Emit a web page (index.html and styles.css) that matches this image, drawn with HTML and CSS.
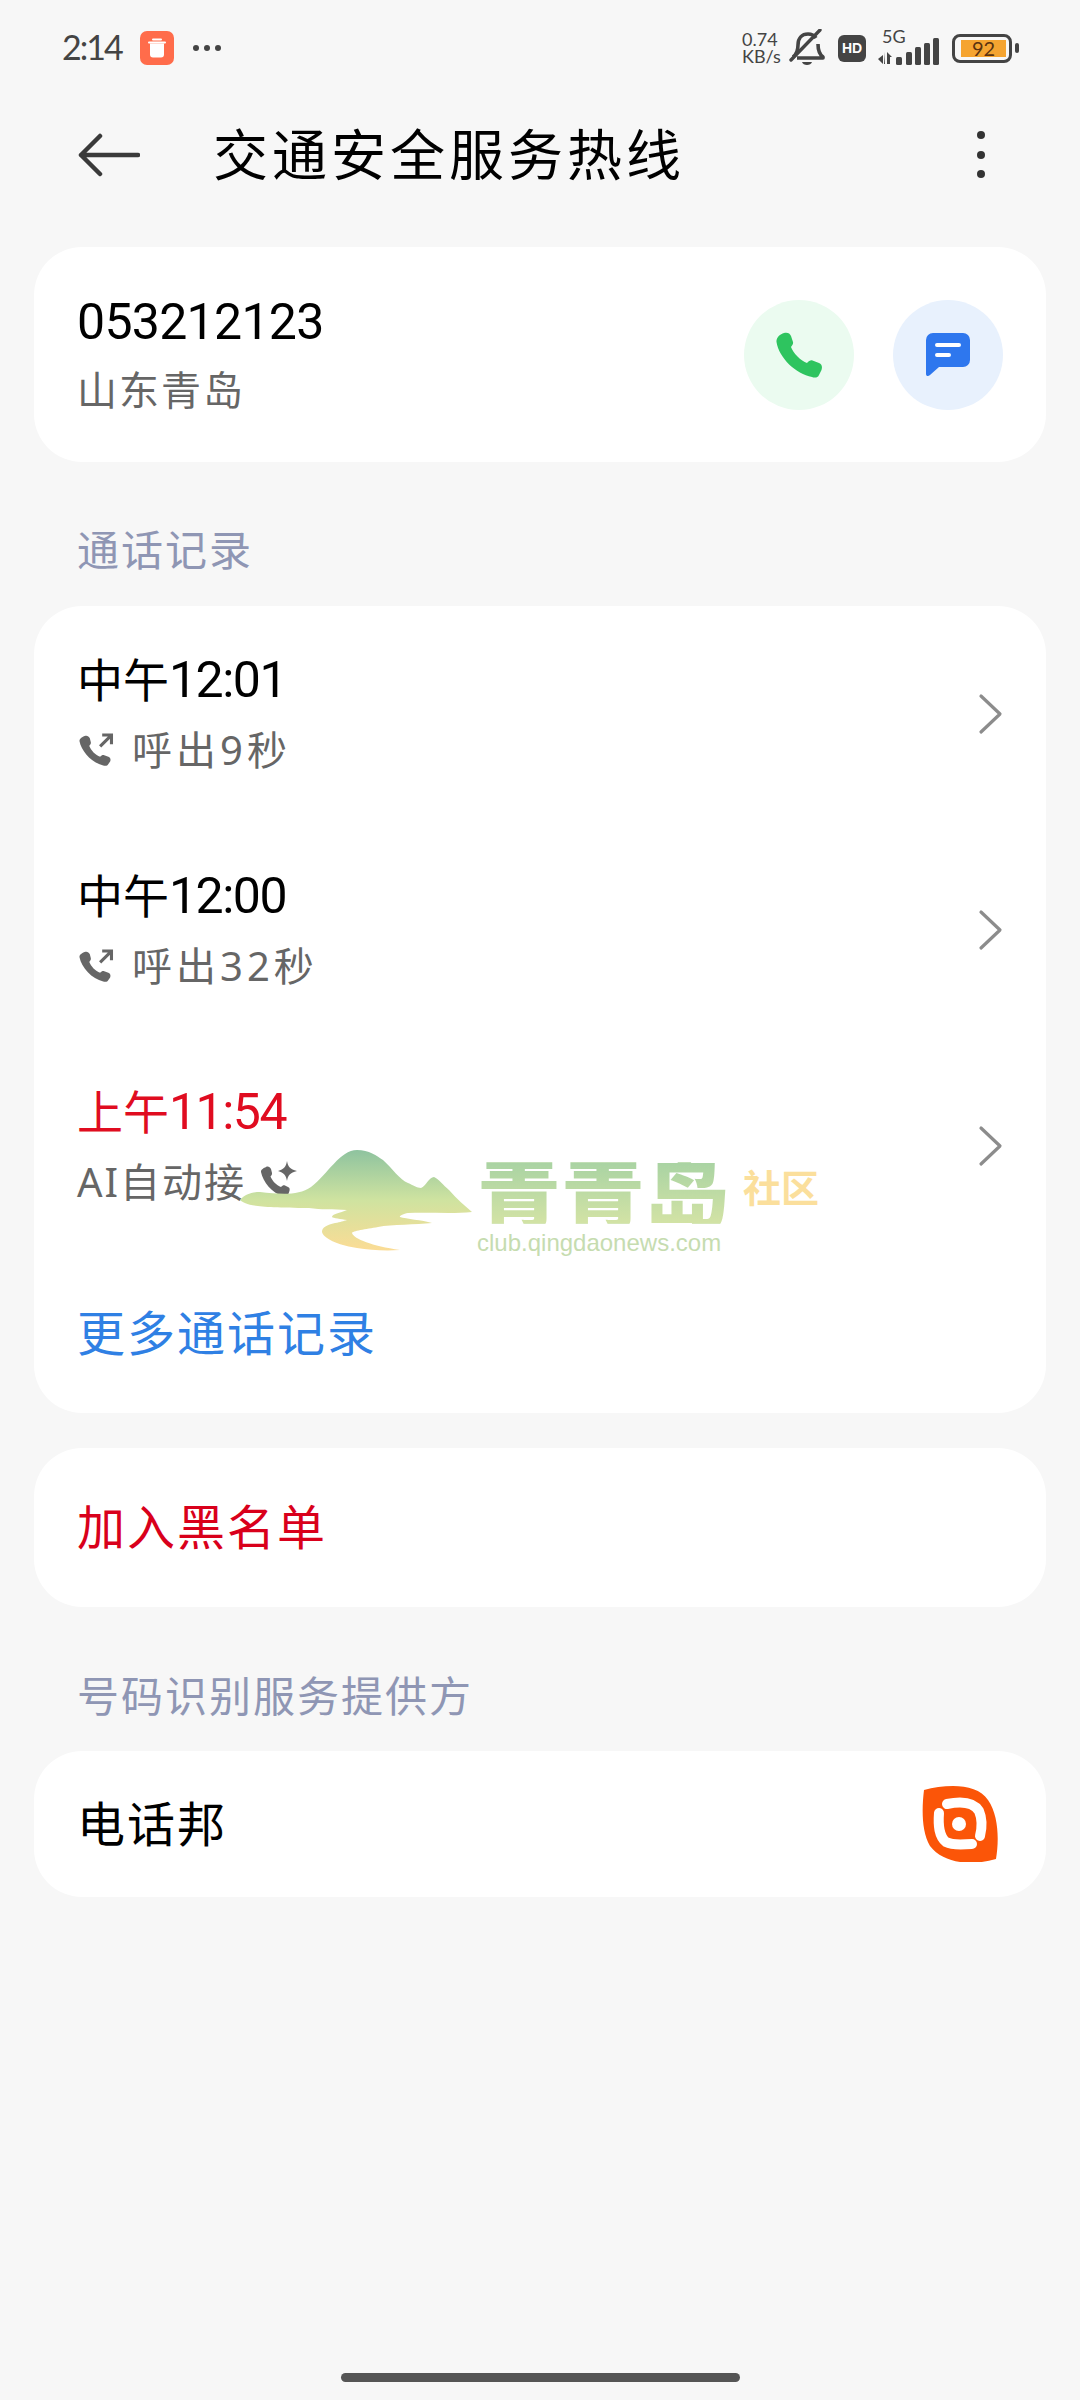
FILE: index.html
```html
<!DOCTYPE html>
<html lang="zh-CN">
<head>
  <meta charset="UTF-8" />
  <meta name="viewport" content="width=device-width, initial-scale=1.0" />
  <title>交通安全服务热线</title>
  <link rel="stylesheet" href="styles.css">
</head>
<body>
  <div class="page">
    <div class="status">
      <div class="status-left">
        <span class="clock">2:14</span>
        <svg class="app-icon" width="34" height="34" viewBox="0 0 34 34">
          <rect width="34" height="34" rx="7" fill="#ff6c4b"/>
          <path d="M13 8.500h8M9 11.500h16" stroke="#fff" stroke-width="2" stroke-linecap="round"/>
          <path d="M10 12.500h14v11a3 3 0 0 1-3 3h-8a3 3 0 0 1-3-3z" fill="#fff"/>
        </svg>
        <svg class="more-dots" width="30" height="8" viewBox="0 0 30 8">
          <circle cx="4" cy="4" r="3" fill="#444"/><circle cx="15" cy="4" r="3" fill="#444"/><circle cx="26" cy="4" r="3" fill="#444"/>
        </svg>
      </div>
      <div class="status-right">
        <div class="speed"><span>0.74</span><span>KB/s</span></div>
        <svg class="bell" width="36" height="38" viewBox="0 0 36 38">
          <path d="M4 28c4-3 5-7 5-12C9 9 13 5 19 5c3 0 6 1 8 4M29 15c0 6 1 10 5 13v1H8" fill="none" stroke="#444" stroke-width="3.600" stroke-linejoin="round"/>
          <path d="M2 31 31 1" stroke="#444" stroke-width="3.400" stroke-linecap="round"/>
          <path d="M13 33h10c-1 4-9 4-10 0z" fill="#444"/>
        </svg>
        <span class="hd">HD</span>
        <div class="net">
          <span class="net-label">5G</span>
          <svg width="62" height="28" viewBox="0 0 62 28">
            <path d="M0 21l5-4v9zM7 14v12h-1zM9 26V14l5 5h-2v7z" fill="#444"/>
            <rect x="18" y="19" width="6" height="8" rx="1.500" fill="#444"/>
            <rect x="28" y="14" width="6" height="13" rx="1.500" fill="#444"/>
            <rect x="37" y="9" width="6" height="18" rx="1.500" fill="#444"/>
            <rect x="46" y="5" width="6" height="22" rx="1.500" fill="#444"/>
            <rect x="55" y="0" width="6" height="27" rx="1.500" fill="#444"/>
          </svg>
        </div>
        <div class="battery">
          <div class="battery-body"><span class="battery-fill">92</span></div>
          <span class="battery-tip"></span>
        </div>
      </div>
    </div>

    <div class="topbar">
      <svg class="back" width="62" height="44" viewBox="0 0 62 44">
        <path d="M60 22H3M22 3 3 22l19 19" fill="none" stroke="#3a3a3a" stroke-width="4.500" stroke-linecap="round" stroke-linejoin="round"/>
      </svg>
      <h1 class="title">交通安全服务热线</h1>
      <svg class="menu" width="10" height="50" viewBox="0 0 10 50">
        <circle cx="5" cy="5" r="4" fill="#333"/><circle cx="5" cy="25" r="4" fill="#333"/><circle cx="5" cy="44" r="4" fill="#333"/>
      </svg>
    </div>

    <div class="card contact">
      <div>
        <div class="line-main">053212123</div>
        <div class="line-sub">山东青岛</div>
      </div>
      <div class="actions">
        <div class="action call">
          <svg width="46" height="46" viewBox="0 0 46 46">
            <path d="M8 1C11 0 14 1 15 4l2 6c.5 2-1 3.500-2 5 2 6 10 14 16 16 2-2 3.500-3 5.500-2.500L43 31c3 1 3.500 4 2.500 7L43 43c-1 3-5 3-7 2C20 42 3 26 .5 10 0 6 4 2 8 1z" fill="#2ec45f"/>
          </svg>
        </div>
        <div class="action msg">
          <svg width="44" height="44" viewBox="0 0 44 44">
            <path d="M7 0h30a7 7 0 0 1 7 7v20a7 7 0 0 1-7 7H13L4 42c-2 2-4 1-4-1V7a7 7 0 0 1 7-7z" fill="#2e77ee"/>
            <path d="M11 12h22M11 22h12" stroke="#fff" stroke-width="4" stroke-linecap="round"/>
          </svg>
        </div>
      </div>
    </div>

    <div class="label">通话记录</div>

    <div class="card calls">
      <div class="row">
        <div>
          <div class="line-time">中午<span class="num">12:01</span></div>
          <div class="line-sub line-out">
            <svg class="call-icon" width="36" height="33" viewBox="0 0 34 32">
              <path d="M6 3c2-1 4 0 5 2l1 4c.3 1.500-.7 2.500-1.500 3.500 1.500 4 6 9 10.500 10.500 1.500-1.500 2.500-2 4-1.500l4 1.500c2 .7 2.500 2.700 1.700 4.700L29 30c-.7 2-3.500 2-5 1.400C13 29 3 18 1 8c-.3-2.500 3-4.300 5-5z" fill="#666"/>
              <path d="M21 13 32 2M23 2h9v9" fill="none" stroke="#666" stroke-width="3"/>
            </svg>
            呼出9秒
          </div>
        </div>
        <svg class="chevron" width="26" height="42" viewBox="0 0 26 42"><path d="M3 3l19 18L3 39" fill="none" stroke="#8c8c8c" stroke-width="3.200" stroke-linecap="round" stroke-linejoin="round"/></svg>
      </div>
      <div class="row">
        <div>
          <div class="line-time">中午<span class="num">12:00</span></div>
          <div class="line-sub line-out">
            <svg class="call-icon" width="36" height="33" viewBox="0 0 34 32">
              <path d="M6 3c2-1 4 0 5 2l1 4c.3 1.500-.7 2.500-1.500 3.500 1.500 4 6 9 10.500 10.500 1.500-1.500 2.500-2 4-1.500l4 1.500c2 .7 2.500 2.700 1.700 4.700L29 30c-.7 2-3.500 2-5 1.400C13 29 3 18 1 8c-.3-2.500 3-4.300 5-5z" fill="#666"/>
              <path d="M21 13 32 2M23 2h9v9" fill="none" stroke="#666" stroke-width="3"/>
            </svg>
            呼出32秒
          </div>
        </div>
        <svg class="chevron" width="26" height="42" viewBox="0 0 26 42"><path d="M3 3l19 18L3 39" fill="none" stroke="#8c8c8c" stroke-width="3.200" stroke-linecap="round" stroke-linejoin="round"/></svg>
      </div>
      <div class="row">
        <div>
          <div class="line-time missed">上午<span class="num">11:54</span></div>
          <div class="line-sub">
            AI自动接
            <svg class="ai-icon" width="38" height="38" viewBox="0 0 38 38">
              <path d="M6 7c2-1 4 0 5 2l1 4c.3 1.500-.7 2.500-1.500 3.500 1.500 4 6 9 10.500 10.500 1.500-1.500 2.500-2 4-1.500l3 1.500c2 .7 2 2.700 1.200 4.700L28 35c-.7 2-3.500 2-5 1.400C12 33 3 22 1 12c-.3-2.500 3-4 5-5z" fill="#666"/>
              <path d="M27 1c1 6 3 8 10 10-7 2-9 4-10 10-1-6-3-8-9-10 6-2 8-4 9-10z" fill="#666"/>
            </svg>
          </div>
        </div>
        <svg class="chevron" width="26" height="42" viewBox="0 0 26 42"><path d="M3 3l19 18L3 39" fill="none" stroke="#8c8c8c" stroke-width="3.200" stroke-linecap="round" stroke-linejoin="round"/></svg>
      </div>
      <div class="more">更多通话记录</div>
    </div>

    <div class="card block">加入黑名单</div>

    <div class="label label-provider">号码识别服务提供方</div>

    <div class="card provider">
      <span class="provider-name">电话邦</span>
      <svg width="76" height="76" viewBox="0 0 76 76">
        <path d="M2 4C25-2 55-3 66 14c11 16 11 41 8 59-24 7-52 5-66-13C-1 45 0 20 2 4z" fill="#fb5508"/>
        <path d="M25 18c15-3 27-1 32 7 3 7 3 17 1 25M17 27c-1 13 0 23 7 29 8 4 18 2 26 2" fill="none" stroke="#fff" stroke-width="10" stroke-linecap="round"/>
        <circle cx="37" cy="38" r="7" fill="#fff"/>
      </svg>
    </div>

    <div class="home-bar"></div>

    <!-- watermark over the list -->
    <div class="watermark">
      <svg class="wm-hill" width="232" height="104" viewBox="0 0 232 104">
        <defs>
          <linearGradient id="hill" x1="0" y1="0" x2="0" y2="1">
            <stop offset="0" stop-color="#8ec39f"/>
            <stop offset=".5" stop-color="#cfe3a0"/>
            <stop offset="1" stop-color="#fbdc95"/>
          </linearGradient>
        </defs>
        <path d="M0 52C5 46 12 44 20 44c20 2 38 4 51-5C88 26 100 2 117 2c12 0 20 6 26 10 9 8 17 20 25 23 5 2 9 5 13 5 5-2 8-11 13-11 5 2 9 8 15 13 8 9 16 16 23 22-20 2-44 0-64 1-5 1-9 3-8 4 6 2 22 3 32 6-16 2-40 1-54 4-12 2-26 4-26 6 2 6 20 13 48 17-16 1-30 0-43-2-14-2-33-8-35-16 0-5 5-7 13-9 6-1 8-2 12-3-6-1-14-2-15-3 0-3 8-4 15-7-14-1-26 0-38-2C14 60 6 57 0 52z" fill="url(#hill)"/>
      </svg>
      <div class="wm-text">
        <div class="wm-top">
          <span class="wm-name">青青岛</span>
          <span class="wm-tag">社区</span>
        </div>
        <div class="wm-url">club.qingdaonews.com</div>
      </div>
    </div>
  </div>
</body>
</html>
```

FILE: styles.css
```css
* {
  box-sizing: border-box;
}
body {
  margin: 0;
  background: #f7f7f7;
  font-family: "Noto Sans", "Noto Sans CJK SC", sans-serif;
}
.page {
  position: relative;
  width: 1080px;
  height: 2400px;
  display: flex;
  flex-direction: column;
  background: #f7f7f7;
}

/* Status bar */
.status {
  height: 96px;
  padding: 28px 62px 0;
  display: flex;
  justify-content: space-between;
  align-items: flex-start;
  color: #444;
}
.status-left {
  display: flex;
  align-items: center;
  gap: 18px;
  height: 40px;
}
.clock {
  font-family: "Lato", sans-serif;
  font-size: 34px;
  letter-spacing: -2px;
  padding-bottom: 3px;
}
.status-right {
  display: flex;
  align-items: center;
  height: 40px;
  margin-right: -1px;
}
.speed {
  display: flex;
  flex-direction: column;
  font-family: "Lato", sans-serif;
  font-size: 18px;
  line-height: 17px;
  width: 50px;
  margin-left: -20px;
  margin-right: -3px;
}
.hd {
  margin-left: 13px;
  width: 28px;
  height: 27px;
  border-radius: 6px;
  background: #444;
  color: #fff;
  font: 700 14px/27px "Liberation Sans", sans-serif;
  text-align: center;
}
.net {
  margin-left: 12px;
  width: 62px;
  height: 36px;
  position: relative;
  display: flex;
  align-items: flex-end;
}
.net-label {
  position: absolute;
  left: 4px;
  top: -3px;
  font-family: "Lato", sans-serif;
  font-size: 18px;
  line-height: 18px;
}
.battery {
  margin-left: 12px;
  display: flex;
  align-items: center;
  gap: 3px;
}
.battery-body {
  width: 60px;
  height: 29px;
  border: 3px solid #444;
  border-radius: 8px;
  padding: 3px;
}
.battery-fill {
  display: block;
  width: 45px;
  height: 17px;
  margin-left: 3px;
  background: #f5a430;
  color: #5a3210;
  font: 20px/17px "Lato", sans-serif;
  text-align: center;
}
.battery-tip {
  width: 4px;
  height: 10px;
  border-radius: 2px;
  background: #444;
}

/* Title bar */
.topbar {
  height: 118px;
  padding: 0 94px 0 78px;
  display: flex;
  align-items: center;
}
.title {
  margin: 0 0 8px 73px;
  flex: 1;
  font-size: 55px;
  font-weight: 400;
  letter-spacing: 4px;
  color: #000;
}

/* Cards */
.card {
  margin: 0 34px;
  background: #fff;
  border-radius: 48px;
}
.contact {
  margin-top: 33px;
  height: 215px;
  padding: 0 43px 0 43px;
  display: flex;
  justify-content: space-between;
  align-items: center;
}
.line-main {
  font-family: "Roboto", sans-serif;
  font-size: 50px;
  letter-spacing: -.7px;
  line-height: 74px;
  margin-bottom: -4px;
  color: #000;
}
.line-sub {
  font-size: 40px;
  line-height: 70px;
  color: #666;
  letter-spacing: 2px;
  display: flex;
  align-items: center;
}
.line-out {
  letter-spacing: 4px;
}
.actions {
  display: flex;
  gap: 39px;
}
.action {
  width: 110px;
  height: 110px;
  border-radius: 50%;
  display: flex;
  align-items: center;
  justify-content: center;
}
.call {
  background: #ebfbf0;
}
.msg {
  background: #e8f1fd;
}
.label {
  height: 144px;
  padding: 26px 43px 0;
  margin: 0 34px;
  display: flex;
  align-items: center;
  font-size: 42px;
  letter-spacing: 2px;
  color: #8f96b4;
}
.label-provider {
  padding-top: 28px;
}
.row {
  height: 216px;
  padding: 0 43px 0 43px;
  display: flex;
  justify-content: space-between;
  align-items: center;
}
.line-time {
  font-size: 46px;
  line-height: 70px;
  color: #000;
}
.num {
  font-family: "Roboto", sans-serif;
  font-size: 50px;
  letter-spacing: -1.5px;
}
.missed {
  color: #e00c20;
}
.call-icon {
  margin-left: 1px;
  margin-right: 18px;
}
.ai-icon {
  margin-left: 14px;
  margin-top: -6px;
}
.chevron {
  margin-right: -1px;
}
.more {
  height: 159px;
  padding: 0 43px 8px;
  display: flex;
  align-items: center;
  font-size: 48px;
  letter-spacing: 2px;
  color: #2f80e4;
}
.block {
  margin-top: 35px;
  height: 159px;
  padding: 0 43px 8px;
  display: flex;
  align-items: center;
  font-size: 48px;
  letter-spacing: 2px;
  color: #d9001b;
}
.provider {
  height: 146px;
  padding: 0 48px 0 43px;
  display: flex;
  justify-content: space-between;
  align-items: center;
}
.provider-name {
  font-size: 48px;
  letter-spacing: 2px;
  color: #000;
  margin-bottom: 6px;
}
.home-bar {
  width: 399px;
  height: 9px;
  margin: auto auto 18px;
  border-radius: 5px;
  background: #555;
}

/* Watermark */
.watermark {
  position: absolute;
  left: 240px;
  top: 1148px;
  display: flex;
  gap: 5px;
}
.wm-text {
  margin-top: 10px;
}
.wm-top {
  display: flex;
  align-items: center;
  gap: 14px;
}
.wm-name {
  display: inline-block;
  font-size: 84px;
  line-height: 70px;
  font-weight: 900;
  transform: scaleY(.88);
  background: linear-gradient(#a9d3a3, #d3e3a5);
  -webkit-background-clip: text;
  background-clip: text;
  color: transparent;
}
.wm-tag {
  font-size: 38px;
  line-height: 40px;
  font-weight: 700;
  color: #fbdf9c;
  margin-top: -12px;
}
.wm-url {
  font: 24px/30px "Liberation Sans", sans-serif;
  color: #c6dcb0;
}
```
